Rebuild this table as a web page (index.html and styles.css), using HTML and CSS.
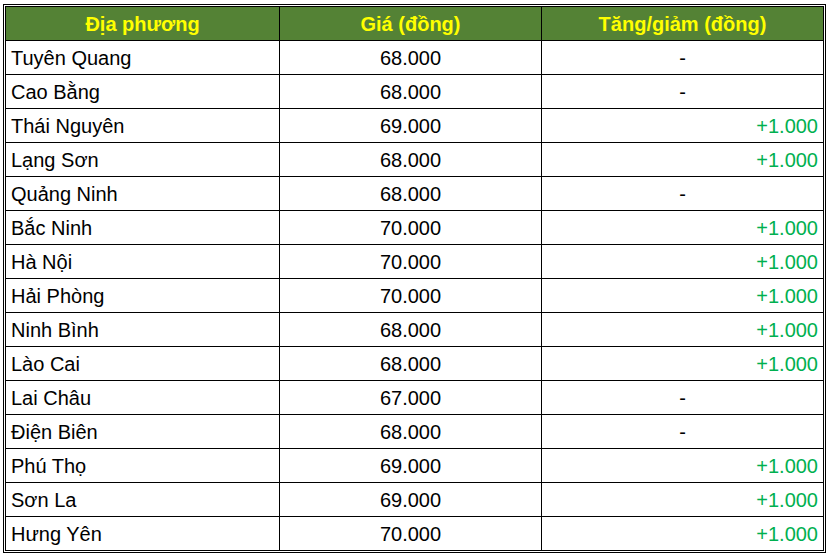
FILE: index.html
```html
<!DOCTYPE html>
<html lang="vi">
<head>
<meta charset="utf-8">
<link rel="stylesheet" href="styles.css">
</head>
<body>
<div class="frame">
<table class="price">
<colgroup><col class="c1"><col class="c2"><col class="c3"></colgroup>
<thead>
<tr><th>Địa phương</th><th>Giá (đồng)</th><th>Tăng/giảm (đồng)</th></tr>
</thead>
<tbody>
<tr><td class="name">Tuyên Quang</td><td class="val">68.000</td><td class="same">-</td></tr>
<tr><td class="name">Cao Bằng</td><td class="val">68.000</td><td class="same">-</td></tr>
<tr><td class="name">Thái Nguyên</td><td class="val">69.000</td><td class="up">+1.000</td></tr>
<tr><td class="name">Lạng Sơn</td><td class="val">68.000</td><td class="up">+1.000</td></tr>
<tr><td class="name">Quảng Ninh</td><td class="val">68.000</td><td class="same">-</td></tr>
<tr><td class="name">Bắc Ninh</td><td class="val">70.000</td><td class="up">+1.000</td></tr>
<tr><td class="name">Hà Nội</td><td class="val">70.000</td><td class="up">+1.000</td></tr>
<tr><td class="name">Hải Phòng</td><td class="val">70.000</td><td class="up">+1.000</td></tr>
<tr><td class="name">Ninh Bình</td><td class="val">68.000</td><td class="up">+1.000</td></tr>
<tr><td class="name">Lào Cai</td><td class="val">68.000</td><td class="up">+1.000</td></tr>
<tr><td class="name">Lai Châu</td><td class="val">67.000</td><td class="same">-</td></tr>
<tr><td class="name">Điện Biên</td><td class="val">68.000</td><td class="same">-</td></tr>
<tr><td class="name">Phú Thọ</td><td class="val">69.000</td><td class="up">+1.000</td></tr>
<tr><td class="name">Sơn La</td><td class="val">69.000</td><td class="up">+1.000</td></tr>
<tr><td class="name">Hưng Yên</td><td class="val">70.000</td><td class="up">+1.000</td></tr>
</tbody>
</table>
</div>
</body>
</html>
```
FILE: styles.css
```css
html, body {
  margin: 0;
  padding: 0;
  background: #ffffff;
}
body {
  font-family: "Liberation Sans", Arial, sans-serif;
}
.frame {
  margin: 4px 0 0 3px;
  width: 823px;
  box-sizing: border-box;
  border: 1px solid #000;
  padding: 1px 2px 1px 1px;
}
.price {
  width: 100%;
  border-collapse: collapse;
  table-layout: fixed;
  font-size: 20px;
  color: #000;
}
.c1 { width: 274px; }
.c2 { width: 262px; }
.c3 { width: 282px; }
.price th,
.price td {
  border: 1px solid #000;
  height: 34px;
  padding: 1px 5px 0 5px;
  line-height: 22px;
  box-sizing: border-box;
  white-space: nowrap;
}
.price th {
  background: #548235;
  color: #ffff00;
  font-weight: bold;
  text-align: center;
}
.price td.name { text-align: left; }
.price td.val { text-align: center; }
.price td.same { text-align: center; }
.price td.up { text-align: right; color: #00b050; }
```
